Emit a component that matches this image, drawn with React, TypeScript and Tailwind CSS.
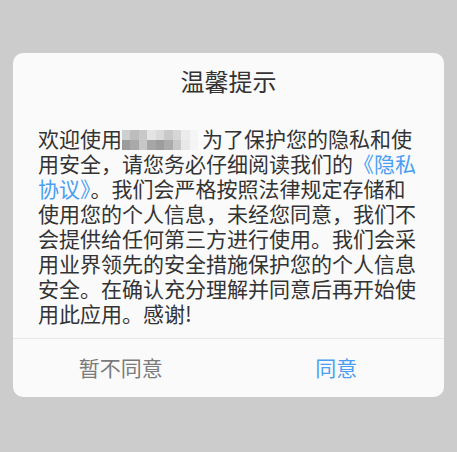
const mosaicTop = ['#cfcfcf', '#bdbdbd', '#c8c8c8', '#e4e4e4', '#dadada', '#c9c9c9', '#d6d6d6', '#ececec', '#f5f5f5'];
const mosaicBottom = ['#9c9c9c', '#a9a9a9', '#c7c7c7', '#a6a6a6', '#9d9d9d', '#ababab', '#c9c9c9', '#e8e8e8', '#f4f4f4'];

function Mosaic() {
  // pixelated app name
  return (
    <span className="inline-block h-[20px] w-[80px] overflow-hidden align-[-3px]">
      <span className="grid w-[76px] grid-cols-9">
        {mosaicTop.map((c, i) => (
          <span key={`t${i}`} className="h-[10px]" style={{ backgroundColor: c }} />
        ))}
        {mosaicBottom.map((c, i) => (
          <span key={`b${i}`} className="h-[10px]" style={{ backgroundColor: c }} />
        ))}
      </span>
    </span>
  );
}

export default function App() {
  return (
    <div
      className="h-[452px] w-full overflow-hidden bg-[#cccccc] px-[13px] pt-[53px]"
      style={{ fontFamily: '"Noto Sans CJK SC", "Noto Sans", sans-serif' }}
    >
      <div className="rounded-[10px] bg-[#fafafa]">
        <div className="px-[25px] pt-[12px] pb-[12px]">
          <h1 className="text-center text-[24px] leading-[32px] text-[#333333]">温馨提示</h1>
          <p className="mt-[29px] text-left text-[21px] leading-[25px] text-[#333333]">
            欢迎使用<Mosaic />为了保护您的隐私和使用安全，请您务必仔细阅读我们的
            <span className="text-[#4a9ff2]">《隐私协议》</span>
            。我们会严格按照法律规定存储和使用您的个人信息，未经您同意，我们不会提供给任何第三方进行使用。我们会采用业界领先的安全措施保护您的个人信息安全。在确认充分理解并同意后再开始使用此应用。感谢!
          </p>
        </div>
        <div className="flex h-[59px] border-t border-[#e8e8e8]">
          <button className="flex-1 text-[21px] text-[#7a7a7a]">暂不同意</button>
          <button className="flex-1 text-[21px] text-[#4a9ff2]">同意</button>
        </div>
      </div>
    </div>
  );
}
